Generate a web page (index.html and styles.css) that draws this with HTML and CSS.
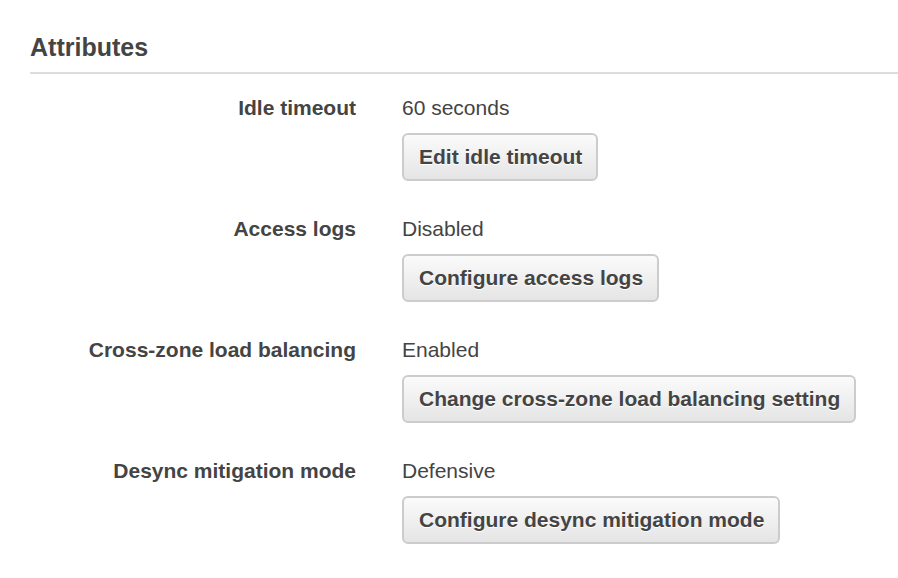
FILE: index.html
```html
<!DOCTYPE html>
<html lang="en">
<head>
<meta charset="utf-8">
<title>Attributes</title>
<link rel="stylesheet" href="styles.css">
</head>
<body>
<section class="panel">
  <h2 class="panel-title">Attributes</h2>
  <div class="attrs">
    <div class="attr-label">Idle timeout</div>
    <div class="attr-value">
      <div class="value-text">60 seconds</div>
      <button class="btn" type="button">Edit idle timeout</button>
    </div>
    <div class="attr-label">Access logs</div>
    <div class="attr-value">
      <div class="value-text">Disabled</div>
      <button class="btn" type="button">Configure access logs</button>
    </div>
    <div class="attr-label">Cross-zone load balancing</div>
    <div class="attr-value">
      <div class="value-text">Enabled</div>
      <button class="btn" type="button">Change cross-zone load balancing setting</button>
    </div>
    <div class="attr-label">Desync mitigation mode</div>
    <div class="attr-value">
      <div class="value-text">Defensive</div>
      <button class="btn" type="button">Configure desync mitigation mode</button>
    </div>
  </div>
</section>
</body>
</html>
```
FILE: styles.css
```css
html, body {
  margin: 0;
  padding: 0;
  background: #ffffff;
}
body {
  font-family: "Liberation Sans", Arial, Helvetica, sans-serif;
  color: #444444;
}
.panel {
  padding: 33px 0 0 30px;
}
.panel-title {
  margin: 0;
  font-size: 25px;
  line-height: 28px;
  font-weight: bold;
  color: #444444;
  padding-bottom: 11px;
  border-bottom: 2px solid #dddddd;
}
.attrs {
  display: grid;
  grid-template-columns: 326px 1fr;
  column-gap: 46px;
  row-gap: 36px;
  margin-top: 22px;
}
.attr-label {
  text-align: right;
  font-weight: bold;
  font-size: 21px;
  line-height: 24px;
  color: #444444;
}
.attr-value {
  display: flex;
  flex-direction: column;
  align-items: flex-start;
  gap: 13px;
}
.value-text {
  font-size: 21px;
  line-height: 24px;
  color: #444444;
}
.btn {
  font-family: "Liberation Sans", Arial, Helvetica, sans-serif;
  font-size: 21px;
  line-height: 24px;
  font-weight: bold;
  color: #444444;
  text-shadow: 0 1px 0 #ffffff;
  padding: 10px 14px 10px 15px;
  border: 2px solid #cccccc;
  border-radius: 6px;
  background: linear-gradient(#fbfbfb, #e5e5e5);
  cursor: pointer;
  margin: 0;
}
```
